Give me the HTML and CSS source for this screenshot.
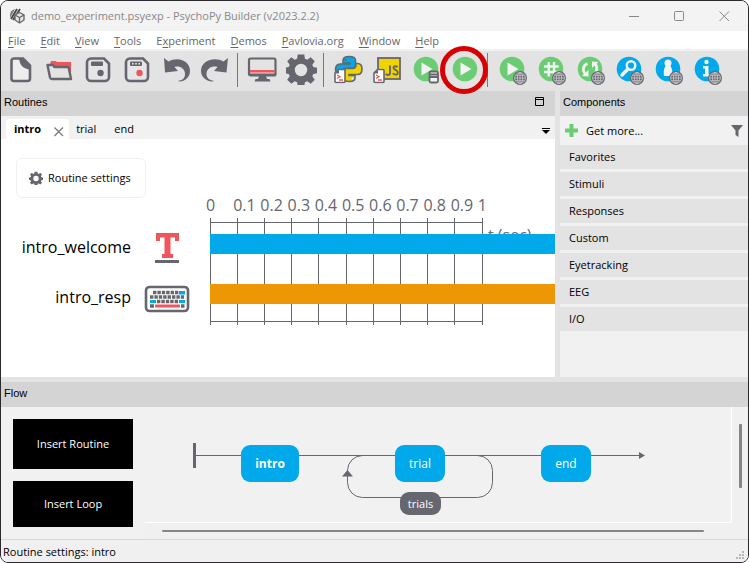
FILE: index.html
```html
<!DOCTYPE html>
<html lang="en">
<head>
<meta charset="utf-8">
<title>demo_experiment.psyexp - PsychoPy Builder (v2023.2.2)</title>
<link rel="stylesheet" href="styles.css">
</head>
<body>
<svg class="defs" aria-hidden="true">
  <defs>
    <symbol id="globe" viewBox="0 0 14 14">
      <circle cx="7" cy="7" r="7" fill="#66666e"/>
      <g fill="none" stroke="#d8d8da" stroke-width="0.7">
        <circle cx="7" cy="7" r="5.4"/>
        <ellipse cx="7" cy="7" rx="2.6" ry="5.4"/>
        <path d="M7 1.5v11M1.500 7h11M2.400 4.300h9.200M2.400 9.700h9.200"/>
      </g>
    </symbol>
    <symbol id="gear" viewBox="0 0 32 32">
      <path fill="#66666e" fill-rule="evenodd" d="M12.700 1.500h6.600l.6 4.200 2.400 1 3.400-2.500 4.100 4.100-2.500 3.400 1 2.400 4.200.6v5.600l-4.200.6-1 2.400 2.500 3.400-4.100 4.100-3.400-2.500-2.400 1-.6 4.200h-6.600l-.6-4.200-2.400-1-3.400 2.500-4.100-4.100 2.500-3.400-1-2.400-4.200-.6v-5.600l4.200-.6 1-2.400-2.500-3.400 4.100-4.100 3.400 2.500 2.400-1zM16 10.800a6.200 6.200 0 1 0 0 12.400 6.200 6.200 0 0 0 0-12.400z"/>
    </symbol>
    <symbol id="script" viewBox="0 0 12 15">
      <path d="M4.500 1h5.500a1 1 0 0 1 1 1v11a1 1 0 0 1-1 1H2a1 1 0 0 1-1-1V4.500z" fill="#fff" stroke="#66666e" stroke-width="1.600"/>
      <path d="M1 5h4V1z" fill="#66666e"/>
      <path d="M3 6.500l3 1.700L3 10M5 11.500h4" fill="none" stroke="#f2545b" stroke-width="1.300"/>
    </symbol>
  </defs>
</svg>

<div class="window">
  <header class="titlebar">
    <svg class="app-icon" width="16" height="16" viewBox="0 0 16 16">
      <path d="M1 8a7 7 0 0 1 5-7l-5 9z" fill="#77777c"/>
      <path d="M2 11L8 1M4 12L11 1" stroke="#444448" stroke-width="1.800"/>
      <path d="M10.500 4.500l4.500 2.500v5l-4.500 3L6 12V7z" fill="#e8e8e8" stroke="#6a6a6e" stroke-width="1.400"/>
      <path d="M6 7l4.500 2.500L15 7M10.500 9.500V15" fill="none" stroke="#6a6a6e" stroke-width="1.400"/>
    </svg>
    <h1 class="title">demo_experiment.psyexp - PsychoPy Builder (v2023.2.2)</h1>
    <div class="window-controls">
      <button type="button" aria-label="Minimize"><svg width="11" height="11"><path d="M0 5.500h10"/></svg></button>
      <button type="button" aria-label="Maximize"><svg width="11" height="11"><rect x=".5" y=".5" width="9" height="9" rx="1"/></svg></button>
      <button type="button" aria-label="Close"><svg width="11" height="11"><path d="M.5.500l9.500 9.500M10 .500L.500 10"/></svg></button>
    </div>
  </header>

  <nav class="menubar">
    <button type="button"><u>F</u>ile</button>
    <button type="button"><u>E</u>dit</button>
    <button type="button"><u>V</u>iew</button>
    <button type="button"><u>T</u>ools</button>
    <button type="button">E<u>x</u>periment</button>
    <button type="button"><u>D</u>emos</button>
    <button type="button"><u>P</u>avlovia.org</button>
    <button type="button"><u>W</u>indow</button>
    <button type="button"><u>H</u>elp</button>
  </nav>

  <div class="toolbar" role="toolbar">
    <button type="button" aria-label="New">
      <svg viewBox="0 0 32 32"><path d="M9 4.500h9l7 7V24.500a2.500 2.500 0 0 1-2.500 2.500H9a2.500 2.500 0 0 1-2.500-2.500V7A2.500 2.500 0 0 1 9 4.500z" fill="#ededee" stroke="#66666e" stroke-width="2.600"/><path d="M13.500 4H18l7.500 7.500V16c-4-1.500-5.500-1-9-4.500-2-2-1.500-5-3-7.500z" fill="#66666e"/></svg>
    </button>
    <button type="button" aria-label="Open">
      <svg viewBox="0 0 32 32"><path d="M6 10l1-3h4.500L13 8h14v13l-3 2L22 12H6z" fill="#f2545b"/><path d="M3.500 11h5.500l1.500 2h12.500a2 2 0 0 1 2 2l2 10H8a2 2 0 0 1-2-1.500z" fill="#e3e3e3" stroke="#66666e" stroke-width="2.400" stroke-linejoin="round"/></svg>
    </button>
    <button type="button" aria-label="Save">
      <svg viewBox="0 0 32 32"><path d="M8 4.500h13l5 5V23a4 4 0 0 1-4 4H8a4 4 0 0 1-4-4V8.500a4 4 0 0 1 4-4z" fill="#e6e6e7" stroke="#66666e" stroke-width="2.600"/><rect x="8" y="7.500" width="12" height="4.500" rx="1" fill="#66666e"/><circle cx="17.500" cy="19" r="3.200" fill="#66666e"/></svg>
    </button>
    <button type="button" aria-label="Save as">
      <svg viewBox="0 0 32 32"><path d="M8 4.500h13l5 5V23a4 4 0 0 1-4 4H8a4 4 0 0 1-4-4V8.500a4 4 0 0 1 4-4z" fill="#e6e6e7" stroke="#66666e" stroke-width="2.600"/><rect x="8" y="7.500" width="12" height="4.500" rx="1" fill="#66666e"/><path d="M10 9.700h1.600M13.200 9.700h1.600M16.400 9.700H18" stroke="#e6e6e7" stroke-width="1.600"/><circle cx="17.500" cy="19" r="3.200" fill="#f2545b"/></svg>
    </button>
    <button type="button" aria-label="Undo">
      <svg viewBox="0 0 32 32"><path d="M3 4l4.500 3.500C16 2.500 29 6 29 17c0 6-5 10.500-10.500 10.500-1.500 0-1.500-.8 0-1C22 26 24 23.500 24 20c0-6-6-8.500-10.500-7L17 17 4 18.500z" fill="#66666e"/></svg>
    </button>
    <button type="button" aria-label="Redo">
      <svg viewBox="0 0 32 32"><path d="M28 4l-4.500 3.500C15 2.500 1 6 1 17c0 6 5.500 10.500 11.500 10.500 1.500 0 1.500-.8 0-1C9 26 6.500 23.500 6.500 20c0-6 6-8.500 11-7L14 17l12.500 1.500z" fill="#66666e"/></svg>
    </button>
    <span class="separator"></span>
    <button type="button" aria-label="Monitor center">
      <svg viewBox="0 0 32 32"><rect x="2" y="4.500" width="26.500" height="17" rx="1.500" fill="#e3e3e3" stroke="#66666e" stroke-width="2.200"/><path d="M3 16h24.500v2.500H3z" fill="#f2545b"/><path d="M2 19.500h26.500v2H2zM12 22h7l1 3h2.500l1 2.500H7.500l1-2.500H11z" fill="#66666e"/></svg>
    </button>
    <button type="button" aria-label="Experiment settings">
      <svg viewBox="1 1 32 32"><use href="#gear" width="32" height="32"/></svg>
    </button>
    <span class="separator"></span>
    <button type="button" aria-label="Compile to Python">
      <svg viewBox="0 0 32 32"><path d="M16 2.500c-5 0-6 1.500-6 4v2.500h7v1H7c-3 0-4.500 2-4.500 5.500S4 21 7 21h2.500v-2c0-3 1.500-4.500 4.500-4.500h5c2.500 0 3.500-1 3.500-3.500V6.500c0-2.500-1.500-4-6.500-4z" fill="#02a9ea" stroke="#66666e" stroke-width="1.600"/><path d="M23 9.500h1.500c3 0 4.500 2 4.500 5.500s-1.500 5.500-4.500 5.500H16v1h6v2.500c0 2.500-1.500 3.500-5.500 3.500S10 26 10 23.500V18c0-2 1-3.500 3.500-3.500h6c2 0 3.500-1.500 3.500-4z" fill="#f1d302" stroke="#66666e" stroke-width="1.600"/><circle cx="12.500" cy="6" r="1" fill="#66666e"/><circle cx="19.500" cy="24.500" r="1" fill="#fff"/><use href="#script" x="1" y="14.500" width="12" height="15"/></svg>
    </button>
    <button type="button" aria-label="Compile to JavaScript">
      <svg viewBox="0 0 32 32"><rect x="6" y="4" width="22" height="21" fill="#f1d302" stroke="#66666e" stroke-width="1.800"/><path d="M18 11.500v7.500q0 2-2 2-1.600 0-2.300-1.300M25.500 13.300q-.8-1.100-2.200-1.100-1.800 0-1.800 1.600 0 1.300 2 2 2.300.8 2.300 2.600 0 2.200-2.300 2.200-1.800 0-2.500-1.400" fill="none" stroke="#66666e" stroke-width="1.900"/><use href="#script" x="1" y="14.500" width="12" height="15"/></svg>
    </button>
    <button type="button" aria-label="Send to runner">
      <svg viewBox="0 0 32 32"><circle cx="15" cy="15" r="12.300" fill="#6ccc74"/><path d="M10.500 8.500v13L21.500 15z" fill="#f2f2f2"/><rect x="18.500" y="17.500" width="8.500" height="11" rx="1.500" fill="#f2f2f2" stroke="#66666e" stroke-width="1.800"/><path d="M19 20.500h8M19 23h8" stroke="#66666e" stroke-width="1.800"/></svg>
    </button>
    <button type="button" class="highlighted" aria-label="Run">
      <svg viewBox="0 0 32 32"><circle cx="15" cy="15" r="12.300" fill="#6ccc74"/><path d="M10.500 8.500v13L21.500 15z" fill="#f2f2f2"/></svg>
    </button>
    <span class="separator"></span>
    <button type="button" aria-label="Run in browser">
      <svg viewBox="0 0 32 32"><circle cx="15" cy="15" r="12.300" fill="#6ccc74"/><path d="M10.500 8.500v13L21.500 15z" fill="#f2f2f2"/><use href="#globe" x="16" y="17" width="14" height="14"/></svg>
    </button>
    <button type="button" aria-label="Sync project">
      <svg viewBox="0 0 32 32"><circle cx="15" cy="15" r="12.300" fill="#6ccc74"/><path d="M8 12.500h4.700V8M18 8v4.500h4.700M8 18h4.700v4.500M18 22.500V18h4.700M12 12.500h7M12 18h7M12.700 11v9M18 11v9" fill="none" stroke="#f2f2f2" stroke-width="2.400"/><use href="#globe" x="16" y="17" width="14" height="14"/></svg>
    </button>
    <button type="button" aria-label="Reload project">
      <svg viewBox="0 0 32 32"><circle cx="15" cy="15" r="12.300" fill="#6ccc74"/><path d="M12.500 9.500c-5 2-5 7-2.500 10.500M18.500 20.500c4-2 4-7 2-10.500" fill="none" stroke="#f2f2f2" stroke-width="2.800"/><path d="M7 22l6.500.5V16zM23.500 8L17 7.500V14z" fill="#f2f2f2"/><use href="#globe" x="16" y="17" width="14" height="14"/></svg>
    </button>
    <button type="button" aria-label="Search Pavlovia">
      <svg viewBox="0 0 32 32"><circle cx="15" cy="15" r="12.300" fill="#02a9ea"/><circle cx="17" cy="11.500" r="4.300" fill="none" stroke="#f2f2f2" stroke-width="2.400"/><path d="M14 15l-6 6" stroke="#f2f2f2" stroke-width="3.500" stroke-linecap="round"/><use href="#globe" x="16" y="17" width="14" height="14"/></svg>
    </button>
    <button type="button" aria-label="User">
      <svg viewBox="0 0 32 32"><circle cx="15" cy="15" r="12.300" fill="#02a9ea"/><circle cx="15" cy="9" r="3.500" fill="#f2f2f2"/><path d="M12.500 12h5c2 3 2 6 1.500 10H11c-.5-4-.5-7 1.500-10z" fill="#f2f2f2"/><use href="#globe" x="16" y="17" width="14" height="14"/></svg>
    </button>
    <button type="button" aria-label="Project info">
      <svg viewBox="0 0 32 32"><circle cx="15" cy="15" r="12.300" fill="#02a9ea"/><circle cx="14.500" cy="8" r="2.200" fill="#f2f2f2"/><path d="M11 12h5.500v8H19v2.500h-8V20h2v-5.500h-2z" fill="#f2f2f2"/><use href="#globe" x="16" y="17" width="14" height="14"/></svg>
    </button>
  </div>

  <main class="panels">
    <section class="routines">
      <h2 class="caption">Routines
        <button type="button" aria-label="Maximize panel"><svg width="10" height="10"><path d="M.5.500h8v8h-8zM0 2.500h9" fill="none" stroke="#000"/></svg></button>
      </h2>
      <div class="tabs">
        <button type="button" class="tab active">intro
          <svg width="10" height="10"><path d="M.5.500l8.500 8.500M9 .500L.500 9" stroke="#777" stroke-width="1.200"/></svg>
        </button>
        <button type="button" class="tab">trial</button>
        <button type="button" class="tab">end</button>
        <button type="button" class="tab-list" aria-label="Tab list"><svg width="8" height="6"><path d="M0 0h8v1H0zM0 2h8L4 6z"/></svg></button>
      </div>
      <div class="routine-canvas">
        <button type="button" class="settings"><svg width="14" height="14"><use href="#gear" width="14" height="14"/></svg>Routine settings</button>
        <div class="timeline">
          <svg class="grid" width="274" height="108" shape-rendering="crispEdges">
            <path fill="none" stroke="#66666e" d="M0 4.500h273M0 103.500h273M.5 0v107M27.500 0v107M54.500 0v107M81.500 0v107M108.500 0v107M136.500 0v107M163.500 0v107M190.500 0v107M217.500 0v107M244.500 0v107M272.500 0v107"/>
          </svg>
          <div class="axis">
            <span>0</span><span>0.1</span><span>0.2</span><span>0.3</span><span>0.4</span><span>0.5</span><span>0.6</span><span>0.7</span><span>0.8</span><span>0.9</span><span>1</span>
          </div>
          <span class="unit">t (sec)</span>
          <div class="component">
            <span class="name">intro_welcome</span>
            <svg width="46" height="34" viewBox="0 0 46 34"><path d="M12 3h23v8h-4V7.500h-4.500V24H29v4H18v-4h2.500V7.500H16V11h-4z" fill="#f2545b"/><path d="M11 30h24v3H11z" fill="#66666e"/></svg>
            <div class="bar text"></div>
          </div>
          <div class="component">
            <span class="name">intro_resp</span>
            <svg width="46" height="34" viewBox="0 0 46 34"><rect x="2" y="7" width="42" height="24" rx="3.500" fill="#fff" stroke="#66666e" stroke-width="2.600"/>
              <g fill="none" stroke="#66666e" stroke-width="3.400"><path d="M9 12.500h26" stroke-dasharray="3.400 1"/><path d="M6 17h34" stroke-dasharray="3.400 1"/><path d="M13 21.500h22" stroke-dasharray="3.400 1"/><path d="M6 26h4M37 26h3.500"/></g>
              <path d="M35 11h6v3.500h-6zM6 20h6v3h-6zM35 20h6v3h-6z" fill="#02a9ea"/><path d="M11 24.500h25v3H11z" fill="#f2545b"/></svg>
            <div class="bar response"></div>
          </div>
        </div>
      </div>
    </section>

    <aside class="components">
      <h2 class="caption">Components</h2>
      <div class="component-tools">
        <button type="button" class="get-more"><svg width="13" height="13"><path d="M4.500 0h4v4.500H13v4H8.500V13h-4V8.500H0v-4h4.500z" fill="#6ccc74"/></svg>Get more...</button>
        <button type="button" aria-label="Filter"><svg width="12" height="12"><path d="M0 0h12L7.500 5.500V12L4.500 10V5.500z" fill="#66666e"/></svg></button>
      </div>
      <div class="categories">
        <button type="button" class="category">Favorites</button>
        <button type="button" class="category">Stimuli</button>
        <button type="button" class="category">Responses</button>
        <button type="button" class="category">Custom</button>
        <button type="button" class="category">Eyetracking</button>
        <button type="button" class="category">EEG</button>
        <button type="button" class="category">I/O</button>
      </div>
    </aside>
  </main>

  <section class="flow">
    <h2 class="caption">Flow</h2>
    <div class="flow-body">
      <div class="flow-actions">
        <button type="button" class="insert-routine">Insert Routine</button>
        <button type="button" class="insert-loop">Insert Loop</button>
      </div>
      <div class="flow-view">
        <div class="flow-canvas">
          <svg width="520" height="115">
            <path d="M48 36h3v25h-3zM494 45l6 3.500-6 3.500zM197 69.500l5.500-6.500 5.500 6.500z" fill="#66666e"/>
            <path d="M50 48.500h446M217.500 48.500h115a15 15 0 0 1 15 15v12a15 15 0 0 1-15 15h-115a15 15 0 0 1-15-15v-12a15 15 0 0 1 15-15z" fill="none" stroke="#66666e"/>
          </svg>
          <div class="node node-intro">intro</div>
          <div class="node node-trial">trial</div>
          <div class="node node-end">end</div>
          <div class="node loop">trials</div>
        </div>
        <div class="scroll-y"></div>
        <div class="scroll-x"></div>
      </div>
    </div>
  </section>

  <footer class="statusbar">Routine settings: intro
    <svg width="12" height="12"><path d="M6 1h2v2H6zM6 4h2v2H6zM3 4h2v2H3zM6 7h2v2H6zM3 7h2v2H3zM0 7h2v2H0z" fill="#b8b8b8"/></svg>
  </footer>
</div>
</body>
</html>
```
FILE: styles.css
```css
*, *::after { box-sizing: border-box; }

body {
  margin: 0;
  background: #fff;
  font: 11px/16px "Open Sans", "Noto Sans", sans-serif;
  color: #000;
}

button {
  margin: 0;
  padding: 0;
  border: 0;
  background: none;
  font: inherit;
  color: inherit;
}

svg { display: block; }
.defs { position: absolute; width: 0; height: 0; }

.window {
  display: flex;
  flex-direction: column;
  min-height: 100vh;
  border: 1px solid #2b292b;
  border-radius: 8px;
  overflow: hidden;
  background: #f1f1f1;
}

/* Title bar */
.titlebar {
  display: flex;
  align-items: center;
  height: 30px;
  padding-left: 8px;
  background: #f3f3f3;
  color: #888;
}
.title { flex: 1; margin: 0 0 0 6px; font-size: 11px; font-weight: 400; }
.window-controls { display: flex; margin-right: 1px; }
.window-controls button { display: grid; place-items: center; width: 45px; height: 30px; }
.window-controls svg { fill: none; stroke: #888; }

/* Menu bar */
.menubar {
  display: flex;
  height: 20px;
  background: #fff;
  border-bottom: 2px solid #f0f0f0;
  color: #666;
}
.menubar button { padding: 1px 8px 0 7px; }
.menubar u { text-underline-offset: 2px; }

/* Toolbar */
.toolbar { display: flex; height: 40px; background: #e3e3e3; }
.toolbar button { position: relative; width: 39px; height: 38px; padding: 0 3px 0 4px; }
.toolbar svg { width: 32px; height: 32px; }
.separator { width: 1px; height: 34px; margin: 2px 5px 0 2px; background: #77777c; }
.highlighted::after {
  content: "";
  position: absolute;
  left: -6px;
  top: -5px;
  z-index: 1;
  width: 48px;
  height: 48px;
  border: 5px solid #d80000;
  border-radius: 50%;
}

/* Panels */
.panels { display: flex; flex: 1; gap: 5px; background: #e3e3e3; }
.caption {
  display: flex;
  justify-content: space-between;
  align-items: center;
  height: 25px;
  margin: 0;
  padding: 0 10px 3px 3px;
  background: #d4d4d4;
  font: 11px/16px "Liberation Sans", sans-serif;
}
.routines { display: flex; flex: 1; flex-direction: column; min-width: 0; }

.tabs { display: flex; align-items: flex-end; height: 23px; padding-left: 5px; background: #f1f1f1; }
.tab { display: flex; align-items: center; gap: 13px; height: 20px; padding: 0 5px 0 8px; }
.tab + .tab { padding: 0 11px 0 7px; }
.tab svg { margin-top: 5px; }
.tab.active { border-radius: 4px 4px 0 0; background: #fff; font-weight: 700; }
.tab-list { margin: 0 5px 5px auto; }

.routine-canvas { flex: 1; padding: 19px 0 45px 15px; background: #fff; overflow: hidden; }
.settings {
  display: flex;
  align-items: center;
  gap: 5px;
  height: 40px;
  padding: 0 14px 0 12px;
  border: 1px solid #f0f0f0;
  border-radius: 6px;
}
.timeline { position: relative; margin-left: -15px; font-size: 16px; line-height: 20px; }
.grid { position: absolute; left: 209px; top: 23px; }
.axis {
  display: grid;
  grid-template-columns: repeat(11, 1fr);
  width: 299px;
  height: 20px;
  margin: -3px 0 7px 205px;
  color: #66666e;
}
.unit { position: absolute; left: 487px; top: 30px; color: #66666e; }
.component {
  position: relative;
  display: grid;
  grid-template-columns: 130px 46px 1fr;
  align-items: center;
  column-gap: 13px;
  height: 50px;
}
.name { text-align: right; }
.bar { height: 20px; margin: 0 0 6px 7px; }
.text { background: #02a9ea; }
.response { background: #ec9703; }

.components { width: 188px; background: #f1f1f1; }
.component-tools { display: flex; justify-content: space-between; align-items: center; height: 29px; padding: 0 5px; }
.get-more { display: flex; align-items: center; gap: 8px; }
.categories { display: flex; flex-direction: column; gap: 3px; }
.category { height: 24px; padding: 0 9px; background: #e3e3e3; text-align: left; }

/* Flow */
.flow { border-top: 5px solid #e3e3e3; }
.flow-body { display: flex; gap: 12px; padding-left: 12px; height: 132px; }
.flow-actions { display: flex; flex-direction: column; gap: 12px; width: 120px; padding: 12px 0; }
.flow-actions button { background: #000; color: #fff; }
.insert-routine { height: 50px; }
.insert-loop { height: 46px; }
.flow-view { display: grid; flex: 1; grid-template: 1fr 16px / 1fr 16px; background: #f0f0f0; }
.flow-canvas {
  position: relative;
  border: solid #fff;
  border-width: 0 1px 1px 0;
  background: #f1f1f1;
  overflow: hidden;
}
.node {
  position: absolute;
  top: 38px;
  width: 50px;
  border-radius: 9px;
  background: #02a9ea;
  color: #fff;
  font-size: 12px;
  line-height: 37px;
  text-align: center;
}
.node-intro { left: 96px; width: 58px; font-weight: 700; }
.node-trial { left: 250px; }
.node-end { left: 396px; }
.loop { left: 255px; top: 85px; width: 41px; background: #66666e; font-size: 11px; line-height: 23px; }
.scroll-y { width: 3px; height: 64px; margin: 17px 0 0 7px; border-radius: 1px; background: #868686; }
.scroll-x { height: 2px; margin: 7px 28px 0 17px; border-radius: 1px; background: #868686; }

.statusbar {
  display: flex;
  justify-content: space-between;
  align-items: center;
  height: 23px;
  padding: 1px 0 0 2px;
  border-top: 1px solid #d7d7d7;
  background: #f0f0f0;
}
.statusbar svg { align-self: flex-end; }
```
